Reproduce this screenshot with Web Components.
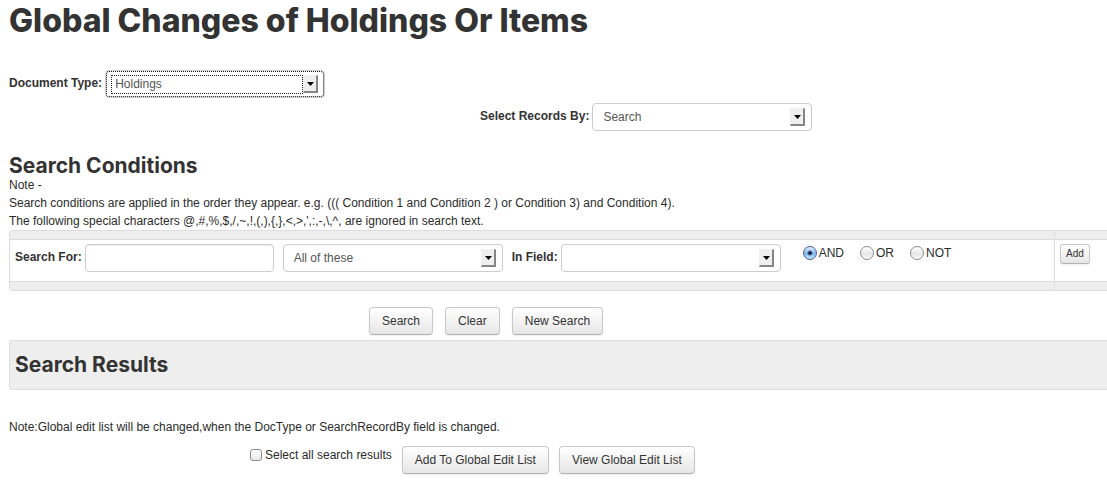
<!DOCTYPE html>
<html lang="en">
<head>
<meta charset="utf-8">
<meta name="viewport" content="width=device-width, initial-scale=1">
<title>Global Changes of Holdings Or Items</title>
<style>
  body { margin: 0; background: #fff; color: #2b2b2b; font: 12px/18px "Liberation Sans", Arial, sans-serif; }
</style>
</head>
<body>
<global-changes></global-changes>

<template id="action-button">
  <style>
    :host { display: block; flex: none; }
    button {
      display: block; box-sizing: border-box; height: 28px; padding: 0 12px; margin: 0;
      border: 1px solid #c8c8c8; border-bottom-color: #b3b3b3; border-radius: 4px;
      background: linear-gradient(#fff, #e6e6e6);
      box-shadow: 0 1px 2px rgba(0, 0, 0, .08);
      color: #333; font: inherit; white-space: nowrap; cursor: pointer;
    }
    :host([small]) button { height: 20px; padding: 0 5px; border-radius: 3px; font-size: 10px; line-height: 16px; }
  </style>
  <button type="button"><slot></slot></button>
</template>

<template id="select-field">
  <style>
    :host { display: flex; flex: none; align-items: center; gap: 3px; }
    label { padding-bottom: 2px; font-weight: bold; color: #333; white-space: nowrap; }
    label:empty { display: none; }
    .box { display: grid; width: 220px; }
    .box > * { grid-area: 1 / 1; }
    select {
      appearance: none; box-sizing: border-box; width: 100%; height: 28px; margin: 0; padding: 0 30px 0 10px;
      border: 1px solid #ccc; border-radius: 4px; background: #fff; color: #555; font: inherit; outline: none;
    }
    svg { justify-self: end; align-self: center; margin-right: 7px; pointer-events: none; }
    .ring { display: none; margin: 5px 22px 4px 6px; border: 1px dotted #222; pointer-events: none; }
    :host([active]) select { padding-left: 9px; outline: 1px dotted #111; outline-offset: -2px; }
    :host([active]) .ring { display: block; }
  </style>
  <label for="control"></label>
  <div class="box">
    <select id="control"></select>
    <span class="ring"></span>
    <svg width="15" height="18" viewBox="0 0 15 18" aria-hidden="true">
      <path d="M0 0h15v18H0z" fill="#efefef"/>
      <path d="M13 1l2-1v18H0l1-2h12z" fill="#858585"/>
      <path d="M4 7h7L7.500 11z" fill="#000"/>
    </svg>
  </div>
</template>

<template id="text-field">
  <style>
    :host { display: flex; flex: none; align-items: center; gap: 3px; }
    label { padding-bottom: 2px; font-weight: bold; color: #333; white-space: nowrap; }
    input {
      box-sizing: border-box; width: 189px; height: 28px; margin: 0; padding: 0 10px;
      border: 1px solid #ccc; border-radius: 4px; background: #fff; color: #555; font: inherit; outline: none;
      box-shadow: inset 0 1px 1px rgba(0, 0, 0, .075);
    }
  </style>
  <label for="control"></label>
  <input id="control" type="text">
</template>

<template id="operator-choice">
  <style>
    :host { display: flex; flex: none; gap: 16px; }
    label { display: flex; align-items: center; gap: 2px; height: 18px; }
    input {
      appearance: none; box-sizing: border-box; width: 14px; height: 14px; margin: 0; border-radius: 50%;
      border: 1px solid #8d8d8d; background: linear-gradient(#fff, #e6e6e6 60%, #fafafa);
    }
    input:checked {
      border-color: #4b5c94;
      background: radial-gradient(circle, #111a33 0 1px, transparent 3px), linear-gradient(#e3f0fc, #7db7f0 55%, #c3edff);
    }
  </style>
  <label><input type="radio" name="operator" value="and" checked>AND</label>
  <label><input type="radio" name="operator" value="or">OR</label>
  <label><input type="radio" name="operator" value="not">NOT</label>
</template>

<template id="condition-table">
  <style>
    :host { display: block; }
    table {
      width: 100%; table-layout: fixed; border-collapse: separate; border-spacing: 0;
      border: 1px solid #ddd; border-right: 0; border-radius: 4px 0 0 4px; overflow: hidden;
    }
    .actions { width: 53px; box-sizing: border-box; border-left: 1px solid #ddd; }
    th, td { padding: 0; text-align: left; vertical-align: top; }
    th, tfoot td { height: 8px; background: #eee; }
    tbody td { height: 32px; padding: 4px 5px 5px; border: solid #ddd; border-width: 1px 0; }
    .row { display: flex; align-items: flex-start; gap: 9px; }
    operator-choice { margin-left: 13px; }
  </style>
  <table>
    <thead><tr><th></th><th class="actions"></th></tr></thead>
    <tbody>
      <tr>
        <td>
          <div class="row">
            <text-field label="Search For:"></text-field>
            <select-field name="Match" options="All of these|Any of these|As a phrase"></select-field>
            <select-field label="In Field:" options=" |Title|Barcode|Location"></select-field>
            <operator-choice></operator-choice>
          </div>
        </td>
        <td class="actions"><action-button small>Add</action-button></td>
      </tr>
    </tbody>
    <tfoot><tr><td></td><td class="actions"></td></tr></tfoot>
  </table>
</template>

<template id="global-changes">
  <style>
    :host { display: block; padding: 0 0 7px 9px; }
    h1, h2 { margin: 0; color: #333; font-family: Inter, Lato, sans-serif; font-weight: 700; white-space: nowrap; }
    h1 { font-size: 32px; line-height: 42px; font-weight: 800; }
    h2 { font-size: 21px; line-height: 20px; }
    p { margin: 0; }
    .type { margin-top: 28px; }
    .by { margin: 5px 0 25px 471px; }
    .buttons { display: flex; gap: 12px; margin: 16px 0 5px 360px; }
    .results { padding: 14px 5px; border: 1px solid #ddd; border-right: 0; border-radius: 4px 0 0 4px; background: #eee; }
    .note { margin: 28px 0 10px; }
    .list { display: flex; align-items: flex-start; gap: 10px; margin-left: 241px; }
    .list label { display: flex; align-items: center; gap: 3px; white-space: nowrap; }
    .list input {
      appearance: none; box-sizing: border-box; width: 12px; height: 12px; margin: 0;
      border: 1px solid #8c8c8c; border-radius: 3px; background: linear-gradient(#fff, #e8e8e8);
    }
  </style>
  <main>
    <h1>Global Changes of Holdings Or Items</h1>
    <select-field class="type" label="Document Type:" options="Holdings|Items" active></select-field>
    <select-field class="by" label="Select Records By:" options="Search|Barcode"></select-field>
    <h2>Search Conditions</h2>
    <p>Note -</p>
    <p>Search conditions are applied in the order they appear. e.g. ((( Condition 1 and Condition 2 ) or Condition 3) and Condition 4).</p>
    <p>The following special characters @,#,%,$,/,~,!,(,),{,},&lt;,&gt;,',:,-,\,^, are ignored in search text.</p>
    <condition-table></condition-table>
    <div class="buttons">
      <action-button>Search</action-button>
      <action-button>Clear</action-button>
      <action-button>New Search</action-button>
    </div>
    <section class="results"><h2>Search Results</h2></section>
    <p class="note">Note:Global edit list will be changed,when the DocType or SearchRecordBy field is changed.</p>
    <div class="list">
      <label><input type="checkbox">Select all search results</label>
      <action-button>Add To Global Edit List</action-button>
      <action-button>View Global Edit List</action-button>
    </div>
  </main>
</template>

<script>
  class TemplateElement extends HTMLElement {
    constructor() {
      super();
      const template = document.getElementById(this.localName);
      this.attachShadow({ mode: 'open' }).append(document.importNode(template.content, true));
    }
  }

  class LabelledField extends TemplateElement {
    connectedCallback() {
      const label = this.getAttribute('label') || '';
      this.shadowRoot.querySelector('label').textContent = label;
      if (!label) this.shadowRoot.getElementById('control').setAttribute('aria-label', this.getAttribute('name') || '');
    }
  }

  class SelectField extends LabelledField {
    connectedCallback() {
      super.connectedCallback();
      const options = (this.getAttribute('options') || '').split('|').map(text => new Option(text.trim()));
      this.shadowRoot.querySelector('select').replaceChildren(...options);
    }
  }

  customElements.define('action-button', class extends TemplateElement {});
  customElements.define('text-field', class extends LabelledField {});
  customElements.define('select-field', SelectField);
  customElements.define('operator-choice', class extends TemplateElement {});
  customElements.define('condition-table', class extends TemplateElement {});
  customElements.define('global-changes', class extends TemplateElement {});
</script>
</body>
</html>
